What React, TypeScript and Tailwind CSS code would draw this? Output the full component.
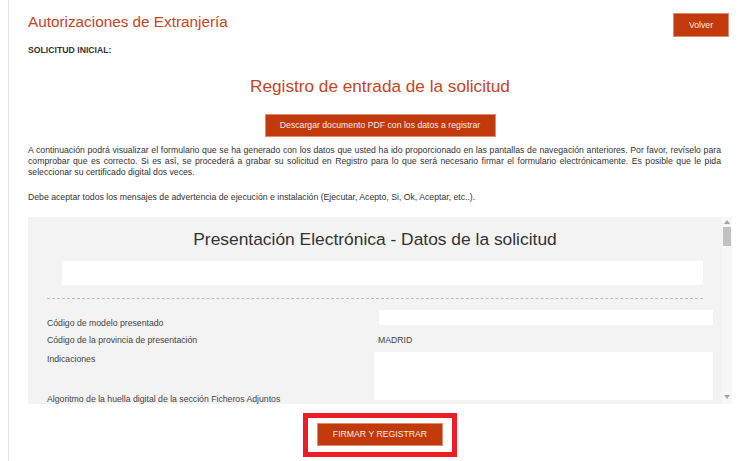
export default function App() {
  const btn =
    "flex items-center justify-center bg-[#c23a0c] border border-[#d98e74] text-[#f8e9e3] text-[8.7px] leading-[11px]";
  return (
    <div className="min-h-[461px] bg-white font-['Liberation_Sans',Arial,sans-serif]">
      <div className="ml-[8px] min-h-[461px] border-l border-[#e6e6e6] pl-[19px] pr-[17px]">
        <div className="flex items-start justify-between pt-[12px]">
          <h1 className="text-[15.3px] leading-[20px] text-[#c9431c]">Autorizaciones de Extranjería</h1>
          <button className={btn + " mt-[1px] mr-[3px] h-[24px] w-[56px]"}>Volver</button>
        </div>
        <div className="mt-[8px] text-[8.7px] leading-[11px] font-bold text-[#333]">SOLICITUD INICIAL:</div>
        <h2 className="mt-[20px] text-center text-[17.2px] leading-[20px] text-[#c9431c]">
          Registro de entrada de la solicitud
        </h2>
        <div className="mt-[18px] flex justify-center">
          <button className={btn + " h-[23px] w-[231px]"}>Descargar documento PDF con los datos a registrar</button>
        </div>
        <div className="mt-[8px] pr-[11px] text-[8.7px] leading-[11px] text-[#333]">
          <div className="text-justify [text-align-last:justify]">
            A continuación podrá visualizar el formulario que se ha generado con los datos que usted ha ido proporcionado en las pantallas de navegación anteriores. Por favor, revíselo para
          </div>
          <div className="text-justify [text-align-last:justify]">
            comprobar que es correcto. Si es así, se procederá a grabar su solicitud en Registro para lo que será necesario firmar el formulario electrónicamente. Es posible que le pida
          </div>
          <div>seleccionar su certificado digital dos veces.</div>
        </div>
        <p className="mt-[14px] text-[8.7px] leading-[11px] text-[#333]">
          Debe aceptar todos los mensajes de advertencia de ejecución e instalación (Ejecutar, Acepto, Si, Ok, Aceptar, etc..).
        </p>
        <div className="mt-[14px] flex h-[187px] overflow-hidden bg-[#f3f3f3]">
          <div className="min-w-0 flex-1">
            <div className="pt-[12px] text-center text-[17.4px] leading-[20px] text-[#333]">
              Presentación Electrónica - Datos de la solicitud
            </div>
            <div className="mt-[12px] ml-[34px] mr-[19px] h-[24px] bg-white" />
            <div className="mt-[13px] ml-[19px] mr-[19px] border-t border-dashed border-[#bdbdbd]" />
            <div className="mt-[11px] pl-[19px] pr-[9px] text-[8.7px] leading-[11px] text-[#444]">
              <div className="flex h-[25px]">
                <div className="w-[332px] shrink-0 pt-[8px]">Código de modelo presentado</div>
                <div className="h-[15px] flex-1 bg-white" />
              </div>
              <div className="flex h-[17px]">
                <div className="w-[331px] shrink-0">Código de la provincia de presentación</div>
                <div className="flex-1">MADRID</div>
              </div>
              <div className="flex">
                <div className="w-[327px] shrink-0">
                  <div className="pt-[2px]">Indicaciones</div>
                  <div className="mt-[29px] whitespace-nowrap">Algoritmo de la huella digital de la sección Ficheros Adjuntos</div>
                </div>
                <div className="h-[48px] flex-1 bg-white" />
              </div>
            </div>
          </div>
          <div className="flex w-[10px] flex-col items-center bg-[#f7f7f7]">
            <svg width="6" height="4" viewBox="0 0 6 4" className="mt-[3px]">
              <path d="M3 0 L6 4 L0 4 Z" fill="#a3a3a3" />
            </svg>
            <div className="mt-[3px] h-[19px] w-[8px] bg-[#c1c1c1]" />
            <div className="flex-1" />
            <svg width="6" height="4" viewBox="0 0 6 4" className="mb-[5px]">
              <path d="M0 0 L6 0 L3 4 Z" fill="#a3a3a3" />
            </svg>
          </div>
        </div>
        <div className="mt-[9px] flex justify-center">
          <div className="border-[5px] border-[#ee1c25] px-[9px] pt-[5px] pb-[6px]">
            <button className={btn + " h-[23px] w-[126px]"}>FIRMAR Y REGISTRAR</button>
          </div>
        </div>
      </div>
    </div>
  );
}
